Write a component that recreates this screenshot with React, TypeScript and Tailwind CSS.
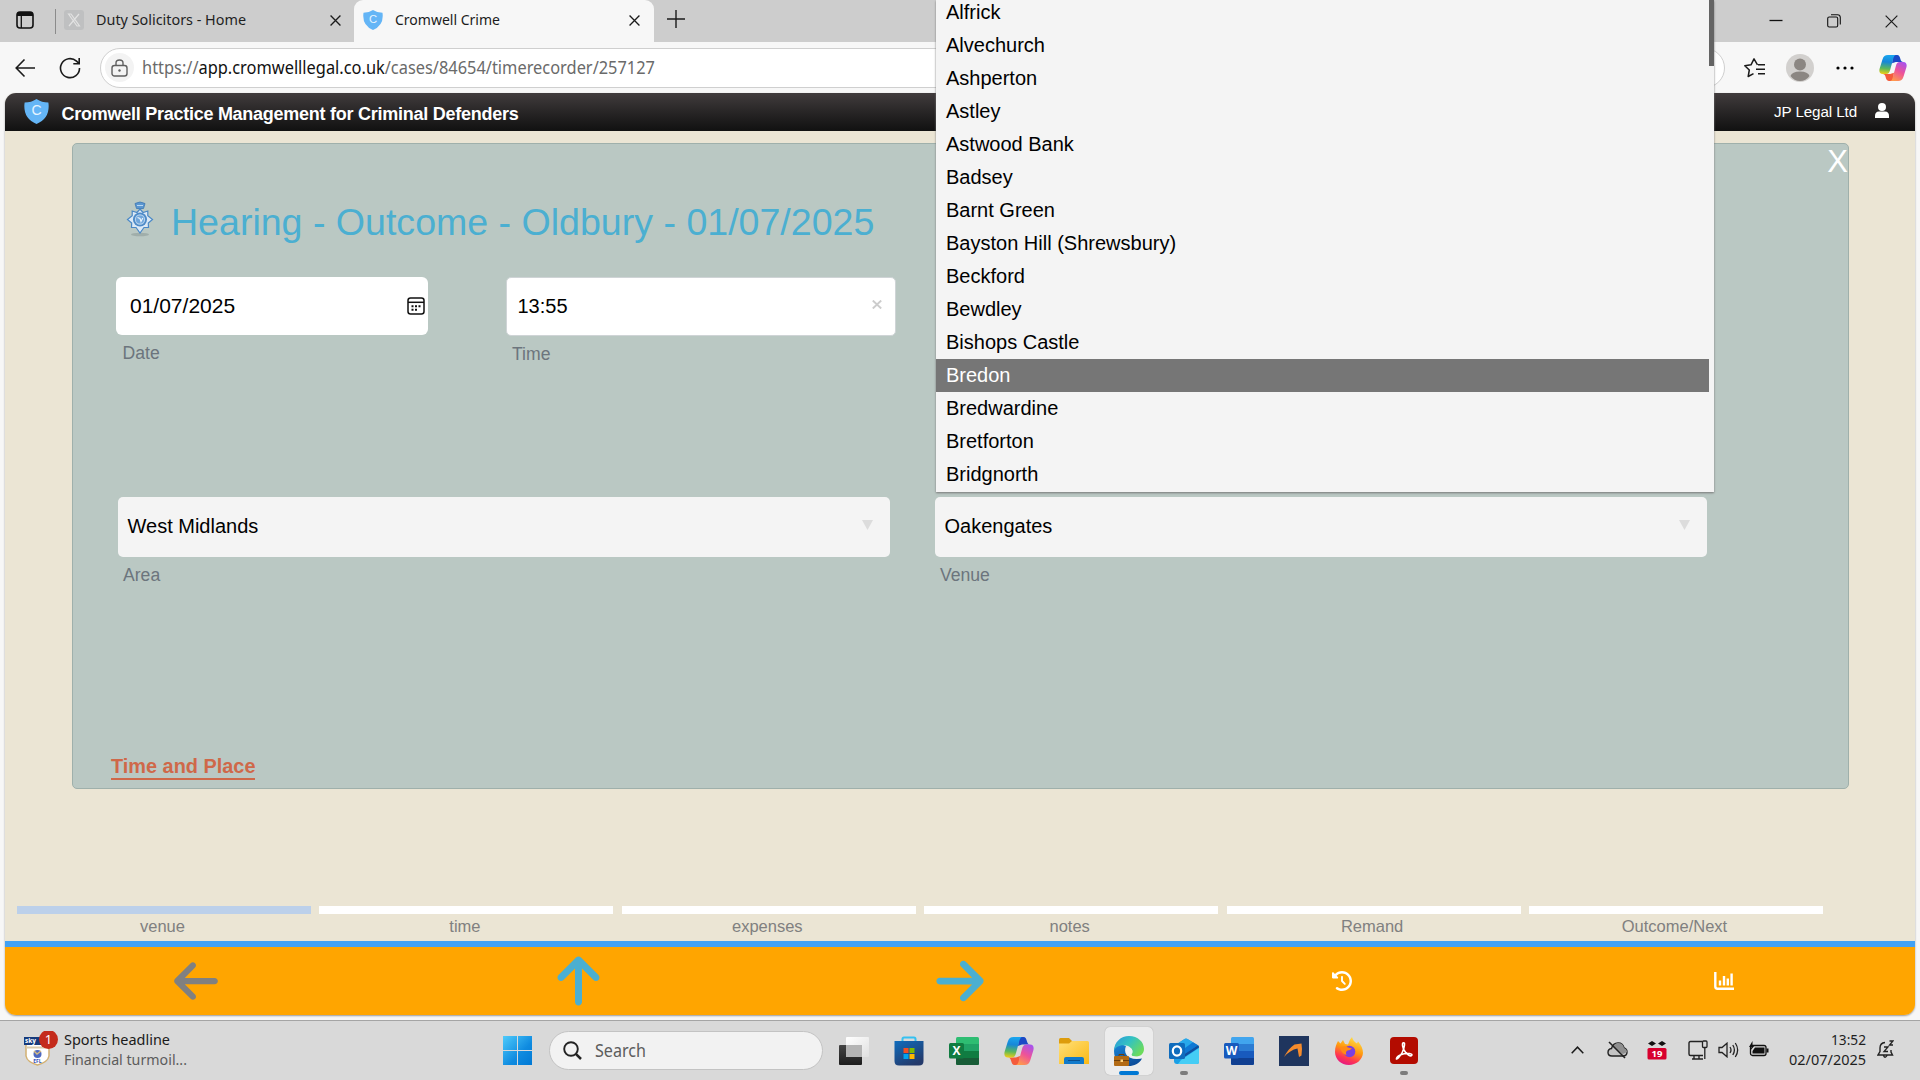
import React from "react";
import { FaArrowLeft, FaArrowRight, FaArrowUp, FaClockRotateLeft } from "react-icons/fa6";

const places = [
  "Alfrick", "Alvechurch", "Ashperton", "Astley", "Astwood Bank", "Badsey", "Barnt Green",
  "Bayston Hill (Shrewsbury)", "Beckford", "Bewdley", "Bishops Castle", "Bredon",
  "Bredwardine", "Bretforton", "Bridgnorth",
];

const steps = ["venue", "time", "expenses", "notes", "Remand", "Outcome/Next"];

/* Single line of text held to a fixed width and centred vertically. */
function Fit({ text, width, size, color, weight, family, height, children }: {
  text?: string; width: number; size: number; color: string; weight?: number;
  family?: string; height?: number; children?: React.ReactNode;
}) {
  const h = height ?? Math.ceil(size * 1.4);
  return (
    <svg width={width + 4} height={h} className="block shrink-0 overflow-visible">
      <text
        x={0}
        y={h / 2 + size * 0.36}
        fontSize={size}
        fill={color}
        fontWeight={weight ?? 400}
        fontFamily={family ?? "'Noto Sans', sans-serif"}
        textLength={width}
        lengthAdjust="spacingAndGlyphs"
      >
        {children ?? text}
      </text>
    </svg>
  );
}

function Shield({ w, h }: { w: number; h: number }) {
  return (
    <svg width={w} height={h} viewBox="0 0 24 24" preserveAspectRatio="none" className="block shrink-0">
      <path d="M12 0 Q17 3.4 23.4 3.4 Q25.500 18.500 12 24 Q-1.500 18.500 .6 3.400 Q7 3.400 12 0Z" fill="#64b5f6" />
      <text x="12" y="15.200" textAnchor="middle" fontSize="13.500" fill="#e6f4ff" fontFamily="Liberation Sans, sans-serif">C</text>
    </svg>
  );
}

function Badge() {
  return (
    <svg width="28" height="36" viewBox="0 0 28 36" className="block shrink-0">
      <defs>
        <radialGradient id="bdg"><stop offset="0" stopColor="#5f9bd6" /><stop offset="1" stopColor="#4a88c6" /></radialGradient>
      </defs>
      <ellipse cx="14" cy="33.500" rx="9" ry="1.800" fill="#95a3a0" opacity=".7" />
      <path d="M9 2.500 Q14 -.5 19 2.500 L17.500 7.500 H10.500Z" fill="#5c97d0" stroke="#3c76b2" strokeWidth=".8" />
      <path d="M11 4.500h6" stroke="#bcd8f2" />
      <path d="M14 8 L17 11.500 L21.800 10 L21.800 14.800 L26.500 18.500 L22.300 22 L22.500 26.500 L18 26.500 L14 32 L10 26.500 L5.500 26.500 L5.700 22 L1.500 18.500 L6.200 14.800 L6.200 10 L11 11.500Z" fill="#dbe9f6" stroke="#4a88c6" strokeWidth="1.200" />
      <circle cx="14" cy="18.500" r="7" fill="url(#bdg)" />
      <circle cx="14" cy="18.500" r="4.600" fill="#6fa6dc" stroke="#b7d2ec" strokeWidth="1.100" />
      <path d="M11.500 16.500 L14 17.500 L15 20.500 L16.800 17" stroke="#e8f3fc" strokeWidth="1.200" fill="none" />
    </svg>
  );
}

function Copilot({ s, id }: { s: number; id: string }) {
  return (
    <svg width={s} height={s} viewBox="0 0 30 30" className="block shrink-0">
      <defs>
        <linearGradient id={id + "a"} x1="0.300" y1="0" x2="0.200" y2="1"><stop offset="0" stopColor="#1aa5ee" /><stop offset=".35" stopColor="#1687d9" /><stop offset=".7" stopColor="#5bb85c" /><stop offset="1" stopColor="#f4cf12" /></linearGradient>
        <linearGradient id={id + "b"} x1="0.800" y1="0" x2="0.300" y2="1"><stop offset="0" stopColor="#a653ee" /><stop offset=".5" stopColor="#ee5398" /><stop offset="1" stopColor="#ff9a4c" /></linearGradient>
      </defs>
      <path d="M15 1 H19.500 C21.600 1 22.300 3 23 5.500 C23.600 7.500 24.200 8.500 26 8.500 H18 L14 10Z" fill="#1b49c6" />
      <path d="M15 29 H10.500 C8.400 29 7.700 27 7 24.500 C6.400 22.500 5.800 21.500 4 21.500 H12 L16 20Z" fill="#f45b3b" />
      <path d="M9.500 1 H18.500 C16.500 1 15.800 3 15 6 L12 17 C11.200 20 10.200 21.500 7.500 21.500 H4 C.6 21.500 -.2 18.500 .7 15.500 L3.800 5.500 C4.800 2.300 6.500 1 9.500 1Z" fill={`url(#${id}a)`} />
      <path d="M20.500 29 H11.500 C13.500 29 14.200 27 15 24 L18 13 C18.800 10 19.800 8.500 22.500 8.500 H26 C29.400 8.500 30.200 11.500 29.300 14.500 L26.200 24.500 C25.200 27.700 23.500 29 20.500 29Z" fill={`url(#${id}b)`} />
    </svg>
  );
}

function Cross({ s }: { s: number }) {
  return <svg width={s} height={s} viewBox="0 0 10 10" className="block shrink-0"><path d="M.5 .5 9.500 9.500M9.500 .5 .5 9.500" stroke="#1b1b1b" strokeWidth={s > 12 ? 0.9 : 1.2} /></svg>;
}

function BrowserChrome() {
  return (
    <>
      <div className="flex h-[42px] items-start bg-[#cdcdcd]">
        <div className="flex h-[42px] w-[354px] shrink-0 items-center pb-[2px] pl-4">
          <svg width="18" height="18" viewBox="0 0 18 18" className="shrink-0"><rect x="1" y="1" width="16" height="16" rx="3" fill="none" stroke="#111" strokeWidth="1.600" /><path d="M1 5V3.500Q1 1 3.500 1H14.500Q17 1 17 3.500V5Z" fill="#111" /><path d="M5.300 5V17" stroke="#111" strokeWidth="1.300" /></svg>
          <div className="ml-[21px] mt-[2px] h-[25px] w-px shrink-0 bg-[#8b8b8b]" />
          <svg width="20" height="20" viewBox="0 0 20 20" className="ml-2 shrink-0"><rect width="20" height="20" rx="3" fill="#bfc0c1" /><path d="M4.500 4 13 16H15.500L7 4ZM15 4 5 16" fill="none" stroke="#e2e2e2" strokeWidth="1.200" /></svg>
          <div className="ml-3 flex-1 pb-[2px]"><Fit text="Duty Solicitors - Home" width={150} size={15} color="#1f1f1f" /></div>
          <div className="mr-[13px]"><Cross s={11} /></div>
        </div>
        <div className="flex h-[42px] w-[300px] shrink-0 items-center rounded-t-[9px] bg-[#f7f7f7] pb-[2px] pl-[9px]">
          <Shield w={20} h={20} />
          <div className="ml-3 flex-1 pb-[2px]"><Fit text="Cromwell Crime" width={105} size={15} color="#1b1b1b" /></div>
          <div className="mr-[14px]"><Cross s={11} /></div>
        </div>
        <svg width="18" height="18" viewBox="0 0 18 18" className="ml-[13px] mt-[10px]"><path d="M9 0V18M0 9H18" stroke="#1b1b1b" strokeWidth="1.400" /></svg>
        <div className="ml-auto mr-[22px] flex h-[42px] items-center gap-[44px]">
          <svg width="14" height="14" viewBox="0 0 14 14"><path d="M.5 6.500H13.500" stroke="#111" strokeWidth="1.300" /></svg>
          <svg width="14" height="14" viewBox="0 0 14 14"><rect x=".7" y="3" width="10" height="10" rx="1.500" fill="none" stroke="#111" strokeWidth="1.100" /><path d="M4 .7H10.500Q13.300 .7 13.300 3.500V10.500" fill="none" stroke="#111" strokeWidth="1.100" /></svg>
          <Cross s={13} />
        </div>
      </div>
      <div className="flex h-[51px] items-center bg-[#f7f7f7] pl-[15px] pr-[13px]">
        <svg width="21" height="20" viewBox="0 0 21 20"><path d="M20 10H1.500M9.500 1.500 1.200 10 9.500 18.500" fill="none" stroke="#1b1b1b" strokeWidth="1.600" /></svg>
        <svg width="22" height="22" viewBox="0 0 22 22" className="ml-[23px]"><path d="M20.500 11A9.500 9.500 0 1 1 17.500 4.200L20 6.500M20.200 1V6.800H14.300" fill="none" stroke="#1b1b1b" strokeWidth="1.600" /></svg>
        <div className="ml-[19px] flex h-10 w-[1625px] shrink-0 items-center rounded-full border border-[#cfcfcf] bg-white pl-1">
          <div className="flex size-[29px] items-center justify-center rounded-full bg-[#f3f3f3]">
            <svg width="17" height="18" viewBox="0 0 17 18"><rect x="1" y="6.500" width="15" height="10.500" rx="2.500" fill="none" stroke="#5f5f5f" strokeWidth="1.400" /><path d="M5 6.500V4Q5 1 8.500 1T12 4V6.500" fill="none" stroke="#5f5f5f" strokeWidth="1.400" /><circle cx="8.500" cy="11.500" r="1.200" fill="#5f5f5f" /></svg>
          </div>
          <div className="ml-2"><Fit width={513} size={18} color="#6a6a6a"><tspan>https://</tspan><tspan fill="#111">app.cromwelllegal.co.uk</tspan><tspan>/cases/84654/timerecorder/257127</tspan></Fit></div>
        </div>
        <div className="ml-auto flex items-center">
          <svg width="22" height="20" viewBox="0 0 22 20"><path d="M13.500 6.800 10 .8 7 6.800 .8 7.700 5.300 12 4.200 18.500 9.500 15.700M14 6.800H21M12 11.300H21M14 15.800H21" fill="none" stroke="#1b1b1b" strokeWidth="1.500" strokeLinejoin="round" /></svg>
          <svg width="28" height="28" viewBox="0 0 28 28" className="ml-5"><circle cx="14" cy="14" r="14" fill="#d2d0ce" /><circle cx="14" cy="10.500" r="6" fill="#8b8682" /><path d="M4.500 22Q6 17.500 14 17.500T23.500 22Q20 27 14 27T4.500 22Z" fill="#8b8682" /></svg>
          <svg width="18" height="4" viewBox="0 0 18 4" className="ml-[22px]"><circle cx="2" cy="2" r="1.600" /><circle cx="9" cy="2" r="1.600" /><circle cx="16" cy="2" r="1.600" /></svg>
          <div className="ml-[25px]"><Copilot s={28} id="ct" /></div>
        </div>
      </div>
    </>
  );
}

function Select({ value, label }: { value: string; label: string }) {
  return (
    <div className="w-[772px]">
      <div className="flex h-[60px] items-center justify-between rounded-[5px] bg-[#f4f4f4] pl-[9.500px] pr-[17px] text-[20px] text-black">
        <span className="relative top-[-1px]">{value}</span>
        <svg width="11" height="10" viewBox="0 0 11 10" className="relative top-[-2px]"><path d="M0 0H11L5.500 10Z" fill="#dcdcdc" /></svg>
      </div>
      <div className="mt-[5px] pl-[5px] text-[17.600px] leading-[27px] text-[#6c757d]">{label}</div>
    </div>
  );
}

function Panel() {
  return (
    <div className="ml-[67px] mt-3 h-[646px] w-[1777px] rounded-[5px] border border-[#9fb0ab] bg-[#bac8c3]">
      <div className="flex h-[53px] justify-end pt-[1px] text-[31px] leading-[34px] text-white">X</div>
      <div className="flex h-[48px] items-start pl-[53px]">
        <div className="pt-[4px]"><Badge /></div>
        <h1 className="ml-[17px] mt-[1px] whitespace-nowrap text-[37.550px] leading-[48px] text-[#4bafd1]">Hearing - Outcome - Oldbury - 01/07/2025</h1>
      </div>
      <div className="flex h-[220px] items-start pl-[43px] pt-[32px]">
        <div className="w-[312px]">
          <div className="flex h-[58px] items-center justify-between rounded-[6px] bg-white pl-[14px] pr-[3px] text-[21px] text-black">
            <span>01/07/2025</span>
            <svg width="18" height="18" viewBox="0 0 18 18"><rect x="1" y="1" width="16" height="16" rx="2.500" fill="none" stroke="#111" strokeWidth="1.500" /><path d="M1 5.300H17" stroke="#111" strokeWidth="1.500" /><path d="M4.500 9.200h2M8 9.200h2M11.500 9.200h2M4.500 12.700h2M8 12.700h2" stroke="#111" strokeWidth="1.900" /></svg>
          </div>
          <div className="mt-[5px] pl-[6.500px] text-[17.600px] leading-[27px] text-[#6c757d]">Date</div>
        </div>
        <div className="ml-[78px] w-[390px]">
          <div className="flex h-[59px] items-center justify-between rounded-[5px] border border-[#cfd4d6] bg-white pl-[10.500px] pr-[13px] text-[20px] text-black">
            <span className="relative top-[-1px]">13:55</span>
            <svg width="10" height="9" viewBox="0 0 10 9" className="relative top-[-2px]"><path d="M.8 .5 9.200 8.500M9.200 .5 .8 8.500" stroke="#ccc" strokeWidth="1.900" /></svg>
          </div>
          <div className="mt-[5px] pl-[6px] text-[17.600px] leading-[27px] text-[#6c757d]">Time</div>
        </div>
      </div>
      <div className="flex h-[258px] items-start gap-[45px] pl-[45px] pt-[32px]">
        <Select value="West Midlands" label="Area" />
        <Select value="Oakengates" label="Venue" />
      </div>
      <div className="flex pl-[38px] pt-[32px]">
        <span className="border-b-2 border-[#cf6849] text-[19.900px] font-bold leading-[23px] text-[#cf6849]">Time and Place</span>
      </div>
    </div>
  );
}

function Workspace() {
  return (
    <div className="flex h-[927px] flex-col bg-[#f7f7f7] px-[5px] pb-[5px]">
      <div className="flex h-[922px] flex-col overflow-hidden rounded-[11px] bg-[#ebe5d4] shadow-[0_1px_2px_#999]">
        <header className="flex h-[38px] shrink-0 items-center bg-linear-to-b from-[#413c3d] to-[#111] pl-[19px] pr-[25px] text-white">
          <div className="pb-[2px]"><Shield w={25} h={25} /></div>
          <span className="ml-[12.500px] mt-1 text-[18px] font-bold leading-6 tracking-[-0.260px]">Cromwell Practice Management for Criminal Defenders</span>
          <span className="ml-auto text-[15.200px] tracking-[-0.100px]">JP Legal Ltd</span>
          <svg width="14" height="15" viewBox="0 0 14 15" className="ml-[18px] mr-px -mt-[3px]"><circle cx="7" cy="4" r="4" fill="#fff" /><path d="M0 15V13Q0 8.500 4 8.500H10Q14 8.500 14 13V15Z" fill="#fff" /></svg>
        </header>
        <Panel />
        <div className="mt-[117px] flex gap-[8.400px] pl-3">
          {steps.map((s, i) => (
            <div key={s} className="w-[294px]">
              <div className={i === 0 ? "h-2 bg-[#bcd0ea]" : "h-2 bg-white"} />
              <div className="h-[27px] pr-[3px] text-center text-[16.500px] leading-[25px] text-[#808080]">{s}</div>
            </div>
          ))}
        </div>
        <nav className="grid flex-1 grid-cols-5 items-center border-t-[6px] border-[#42a2f5] bg-[#ffa500]">
          <FaArrowLeft className="mx-auto h-[50px] w-[44px] text-[#808080]" />
          <FaArrowUp className="mx-auto h-[56px] w-[49px] text-[#4bafd1]" />
          <FaArrowRight className="mx-auto h-[54px] w-[48px] text-[#4bafd1]" />
          <FaClockRotateLeft className="mx-auto size-5 text-white" />
          <svg width="20" height="18" viewBox="0 0 20 18" className="mx-auto"><path d="M1.300 0V14.500Q1.300 16.700 3.500 16.700H20" fill="none" stroke="#fff" strokeWidth="2.400" /><path d="M6 8.500V13.500M10 4V13.500M13.800 6.500V13.500M17.600 1.500V13.500" stroke="#fff" strokeWidth="2.400" /></svg>
        </nav>
      </div>
    </div>
  );
}

function Dropdown() {
  return (
    <div className="absolute left-[936px] top-0 h-[492px] w-[778px] overflow-hidden bg-[#f4f4f4] shadow-[0_1px_2px_#777]">
      <ul className="-mt-[4px] w-[773px]">
        {places.map((p) => (
          <li key={p} className={p === "Bredon" ? "h-[33px] bg-[#767676] pl-[10px] text-[20px] leading-[33px] text-white" : "h-[33px] pl-[10px] text-[20px] leading-[33px] text-black"}>{p}</li>
        ))}
      </ul>
      <div className="absolute right-0 top-0 h-[66px] w-[5px] bg-[#646464]" />
    </div>
  );
}

function OfficeTile({ letter, dark, c }: { letter: string; dark: string; c: string[] }) {
  return (
    <svg width="30" height="30" viewBox="0 0 30 30">
      <rect x="7" y="1" width="23" height="28" rx="1.500" fill={c[0]} />
      <path d="M7 8h23v7H7z" fill={c[1]} /><path d="M7 15h23v7H7z" fill={c[2]} /><path d="M7 22h23v5.500Q30 29 28.500 29H8.500Q7 29 7 27.500z" fill={c[3]} />
      <rect x="0" y="7" width="15" height="15.500" rx="1.500" fill={dark} />
      <text x="7.500" y="19" textAnchor="middle" fontSize="12" fontWeight="700" fill="#fff" fontFamily="Open Sans, sans-serif">{letter}</text>
    </svg>
  );
}

function TaskIcons() {
  return (
    <>
      <svg width="30" height="30" viewBox="0 0 30 30">
        <defs>
          <linearGradient id="tvd" x1="0" y1="0" x2="0" y2="1"><stop offset="0" stopColor="#444" /><stop offset="1" stopColor="#1d1d1d" /></linearGradient>
          <linearGradient id="tvl" x1="0" y1="0" x2="1" y2="1"><stop offset="0" stopColor="#fff" /><stop offset="1" stopColor="#e0e0e0" /></linearGradient>
        </defs>
        <rect x="0" y="9" width="23" height="20" rx="1" fill="url(#tvd)" /><rect x="7" y="1" width="23" height="20" rx="1" fill="url(#tvl)" /><rect x="7" y="9" width="16" height="12" fill="#b4b4b4" />
      </svg>
      <svg width="30" height="30" viewBox="0 0 30 30">
        <defs><linearGradient id="st" x1="0" y1="0" x2="0.600" y2="1"><stop offset="0" stopColor="#0f6cbd" /><stop offset="1" stopColor="#243a6b" /></linearGradient></defs>
        <path d="M8.500 6V3Q8.500 1.500 10 1.500H20Q21.500 1.500 21.500 3V6" fill="none" stroke="#35c1f1" strokeWidth="2" />
        <path d="M.5 5H29.500V25Q29.500 29.500 25 29.500H5Q.5 29.500 .5 25Z" fill="url(#st)" />
        <path d="M9.500 12h5v5h-5z" fill="#f25022" /><path d="M15.500 12h5v5h-5z" fill="#7fba00" /><path d="M9.500 18h5v5h-5z" fill="#00a4ef" /><path d="M15.500 18h5v5h-5z" fill="#ffb900" />
      </svg>
      <OfficeTile letter="X" dark="#107c41" c={["#2ebd72", "#21a366", "#107c41", "#185c37"]} />
      <Copilot s={30} id="cb" />
      <svg width="30" height="30" viewBox="0 0 30 30">
        <defs><linearGradient id="fo" x1="0" y1="0" x2="1" y2="1"><stop offset="0" stopColor="#ffe07a" /><stop offset="1" stopColor="#fbb914" /></linearGradient></defs>
        <path d="M0 3.500Q0 2 1.500 2H10L13 5V12H0Z" fill="#dd9c0c" />
        <path d="M0 7.500H10L13 5H28.500Q30 5 30 6.500V28H0Z" fill="url(#fo)" />
        <path d="M5 28V23Q5 21 7 21H23Q25 21 25 23V28Z" fill="#117acb" /><path d="M9 24.500H21" stroke="#0a4f8e" />
      </svg>
    </>
  );
}

function EdgeIcon() {
  return (
    <svg width="30" height="30" viewBox="0 0 30 30">
      <defs>
        <linearGradient id="eg" x1="0" y1="0" x2="1" y2="0.600"><stop offset="0" stopColor="#2a94dc" /><stop offset=".5" stopColor="#33c2c2" /><stop offset="1" stopColor="#6cdb5c" /></linearGradient>
        <linearGradient id="eb" x1="0" y1="0" x2="0.500" y2="1"><stop offset="0" stopColor="#1a86d8" /><stop offset="1" stopColor="#0c4e9b" /></linearGradient>
      </defs>
      <path d="M0 15C0 8 7 7 12 10 9 17 13 25 28 22.500 25 28 20 30 15 30 6 30 0 24 0 15Z" fill="url(#eb)" />
      <path d="M0 15C0 6 7 0 15 0 24 0 30 6 30 13 30 18 26 20.500 22 20.500 19 20.500 17 19.500 17.500 18.500 20 16 18 10.500 12 9.500 6 8.500 1 11 0 15Z" fill="url(#eg)" />
      <path d="M12 15.500Q12 11.500 15.500 11.800 19 12.500 18.300 16.500 17 18 17.300 18.800 17.500 20.500 22 20.800 25.500 21 28.500 19.500L27.500 22Q20 23.500 15.500 20.500 12 18.500 12 15.500Z" fill="#eef2f4" />
      <rect x="0" y="20" width="15" height="10" rx="1" fill="#b26a14" /><path d="M5 20V18.500H10V20M0 24.500H15" stroke="#6f3f08" fill="none" /><path d="M6.500 23.500h2.500v2.500H6.500z" fill="#ffd27a" />
    </svg>
  );
}

function MoreIcons() {
  return (
    <>
      <svg width="30" height="30" viewBox="0 0 30 30">
        <path d="M5 10 15.500 3Q17 2 18.500 3L30 10V26Q30 28 28 28H8Q5 28 5 25Z" fill="#1a9fe6" />
        <path d="M9 7.300 15.500 3Q17 2 18.500 3L24 6.300 12 15Z" fill="#28a8ea" />
        <path d="M24 6.300 29 9.300 14 19V13.500Z" fill="#0f78d4" />
        <path d="M29 9.300Q30 10 30 11.500L14 22V19Z" fill="#0f4fa0" />
        <path d="M12 24 30 12V26Q30 28 28 28H9Z" fill="#45cdf5" />
        <rect x="0" y="7" width="16" height="16" rx="1.500" fill="#0f6cbd" /><ellipse cx="8" cy="15" rx="4.200" ry="4.600" fill="none" stroke="#fff" strokeWidth="2.200" />
      </svg>
      <OfficeTile letter="W" dark="#185abd" c={["#41a5ee", "#2b7cd3", "#185abd", "#103f91"]} />
      <svg width="30" height="30" viewBox="0 0 30 30"><rect width="30" height="30" fill="#1f355e" /><path d="M5 21Q9 13 15.500 8.500L22.500 7.500Q23.500 13 22.500 19.500L20 21 18.500 12.500Q11 14 5 21Z" fill="#f58b2c" /></svg>
      <svg width="30" height="30" viewBox="0 0 30 30">
        <defs><linearGradient id="ff" x1="0.700" y1="0" x2="0.300" y2="1"><stop offset="0" stopColor="#ffe14a" /><stop offset=".45" stopColor="#ff980e" /><stop offset=".75" stopColor="#ff3750" /><stop offset="1" stopColor="#e31587" /></linearGradient></defs>
        <path d="M4 5 6.500 7.500 9 4 11 8 14 8.500Q15 4 18 1 19 5 23 7.500L24 5.500Q29 11 29 17C28.500 24 22 29 15 29 7 29 1 23 1 16 1 11 2.500 8 4 5Z" fill="url(#ff)" />
        <circle cx="15.500" cy="15.500" r="5.800" fill="#7a3fe0" /><path d="M6 12Q10 9 14 11.500L18 12.500Q16 14.500 13.500 14.500 11 16 12.500 19 8 18 6 12Z" fill="#ff8a16" />
      </svg>
      <svg width="30" height="30" viewBox="0 0 30 30"><rect x="1" y="1" width="28" height="27" rx="4" fill="#b30b00" /><path d="M7.500 22.500C8 19.500 14 17 20.500 17.500 25 18.200 22.500 21 19.500 19 15 16 13 10.500 13.500 8 14 6 16 6.500 15.500 9 15 13 12 19 9.500 21.800 8 23.500 7 23.200 7.500 22.500Z" fill="none" stroke="#fff" strokeWidth="1.600" /></svg>
    </>
  );
}

function Taskbar() {
  return (
    <div className="flex h-[60px] items-center border-t border-[#a5a5a5] bg-[#d9d9d9]">
      <svg width="40" height="40" viewBox="0 0 40 40" className="ml-[24px] shrink-0">
        <path d="M2 8H25V25Q24 31 13.500 34 3 31 2 25Z" fill="#fff" stroke="#d2b071" strokeWidth="1.500" />
        <rect x="0" y="6" width="26" height="8" fill="#153a7c" /><path d="M2 16.500H25" stroke="#d9c9ab" strokeWidth="2" />
        <text x="6.500" y="12" textAnchor="middle" fontSize="6.500" fontWeight="700" fill="#fff" fontFamily="Open Sans, sans-serif">sky</text>
        <circle cx="13.500" cy="23" r="4" fill="#4d68c0" /><path d="M10 20l3 3 4-3" stroke="#d5ba82" strokeWidth="1.500" fill="none" />
        <text x="13.500" y="31.500" textAnchor="middle" fontSize="5" fontWeight="700" fill="#3550b5" fontFamily="Open Sans, sans-serif">EFL</text>
        <circle cx="24.500" cy="8.500" r="9.500" fill="#c42b1c" />
        <text x="24.500" y="13.300" textAnchor="middle" fontSize="13" fill="#fff" fontFamily="Noto Sans, sans-serif">1</text>
      </svg>
      <div className="w-[439px] shrink-0 pb-[2px]">
        <Fit text="Sports headline" width={106} size={15} height={20} color="#1b1b1b" />
        <Fit text="Financial turmoil..." width={123} size={15} height={20} color="#5c5c5c" />
      </div>
      <svg width="29" height="29" viewBox="0 0 29 29" className="shrink-0">
        <defs><linearGradient id="win" x1="0" y1="0" x2="1" y2="1"><stop offset="0" stopColor="#4fcbfb" /><stop offset=".6" stopColor="#0f8be0" /><stop offset="1" stopColor="#0078d4" /></linearGradient></defs>
        <path d="M0 0H14V14H0ZM15 0H29V14H15ZM0 15H14V29H0ZM15 15H29V29H15Z" fill="url(#win)" />
      </svg>
      <div className="ml-[17px] flex h-[39px] w-[274px] shrink-0 items-center rounded-full border border-[#c3c3c3] bg-[#f2f2f2] pl-[13px]">
        <svg width="19" height="19" viewBox="0 0 19 19"><circle cx="8" cy="8" r="6.800" fill="none" stroke="#222" strokeWidth="1.900" /><path d="M12.800 12.800 18 18" stroke="#222" strokeWidth="2.500" /></svg>
        <div className="ml-[13px]"><Fit text="Search" width={51} size={17.5} color="#5d5d5d" /></div>
      </div>
      <div className="ml-[15.500px] flex items-center gap-[25px]"><TaskIcons /></div>
      <div className="relative ml-[16px] flex h-[48px] w-[48px] shrink-0 items-center justify-center rounded-[5px] bg-[#ececec] shadow-[0_0_1px_#999]">
        <EdgeIcon />
        <div className="absolute bottom-0 left-[14px] h-1 w-5 rounded-full bg-[#0078d4]" />
      </div>
      <div className="relative ml-[16px] flex items-center gap-[25px]">
        <MoreIcons />
        <div className="absolute left-[11px] top-[35px] h-1 w-2 rounded-full bg-[#7c7c7c]" />
        <div className="absolute right-[11px] top-[35px] h-1 w-2 rounded-full bg-[#7c7c7c]" />
      </div>
      <div className="ml-auto flex items-center pb-[2px]">
        <svg width="13" height="8" viewBox="0 0 13 8"><path d="M.7 7.300 6.500 1.200 12.300 7.300" fill="none" stroke="#1b1b1b" strokeWidth="1.500" /></svg>
        <svg width="21" height="18" viewBox="0 0 21 18" className="ml-[23px]"><path d="M5 15Q1 15 1 11.500 1 8 4.500 7.500 6 2 11 2 16 2 17 7 20 8 20 11 20 15 16 15Z" fill="#c4c4c4" stroke="#222" strokeWidth="1.400" /><path d="M6 6Q8 2 11 2 16 2 17 7 20 8 20 11L16 13Z" fill="#8f8f8f" /><path d="M2 1 18 17" stroke="#222" strokeWidth="1.600" /></svg>
        <svg width="20" height="20" viewBox="0 0 20 20" className="ml-[19px]"><path d="M1 3.500 5 1 9 3.500 5 6ZM11 3.500 15 1 19 3.500 15 6Z" fill="#111" /><rect x=".5" y="8" width="19" height="11.500" rx="1.500" fill="#d8002e" /><text x="10" y="17.300" textAnchor="middle" fontSize="9.500" fontWeight="700" fill="#fff" fontFamily="Open Sans, sans-serif">19</text></svg>
        <svg width="20" height="20" viewBox="0 0 20 20" className="ml-[21px]"><path d="M14 1.500H2.500Q1 1.500 1 3V14Q1 15.500 2.500 15.500H15M6 15.500V19M11 15.500V19M4 19H15" fill="none" stroke="#222" strokeWidth="1.400" /><rect x="14.500" y="1" width="4.500" height="6.500" rx="1" fill="none" stroke="#222" strokeWidth="1.300" /><path d="M16.800 7.500V19" stroke="#222" strokeWidth="1.300" /></svg>
        <svg width="21" height="16" viewBox="0 0 21 16" className="ml-[10px]"><path d="M1 5.500H4L9 1.200V14.800L4 10.500H1ZM12 5Q14 8 12 11M14.800 3Q18 8 14.800 13M17.300 1Q22 8 17.300 15" fill="none" stroke="#222" strokeWidth="1.300" /></svg>
        <svg width="21" height="16" viewBox="0 0 21 16" className="-mt-[2px] ml-[9px]"><rect x="2.500" y="4.500" width="15.500" height="10" rx="2" fill="none" stroke="#111" strokeWidth="1.300" /><path d="M7 6.500H16.500V12.500H4.500V10ZM18.500 7.500H20.500V11.500H18.500Z" fill="#111" /><path d="M4.500 0 1 6H3.500L2 10 7 4H4.500Z" fill="#111" /></svg>
        <div className="ml-[20px] flex w-[77px] flex-col items-end">
          <div className="-mr-[4px]"><Fit text="13:52" width={35} size={15} height={20} color="#1f1f1f" /></div>
          <div className="-mr-[4px]"><Fit text="02/07/2025" width={77} size={15} height={20} color="#1f1f1f" /></div>
        </div>
        <svg width="17" height="19" viewBox="0 0 17 19" className="ml-[11px] mr-[26px]"><path d="M8 2.500Q3 3 3 8V11.500L1 15H15.500L14 12V10M6.500 15.500Q8 19 10 15.500" fill="none" stroke="#222" strokeWidth="1.400" /><path d="M7 7H11L7 11.500H11M12.500 1H16L12.500 5H16" fill="none" stroke="#222" strokeWidth="1.300" /></svg>
      </div>
    </div>
  );
}

export default function App() {
  return (
    <div className="relative h-[1080px] w-[1920px] overflow-hidden font-['Liberation_Sans',sans-serif]">
      <BrowserChrome />
      <Workspace />
      <Taskbar />
      <Dropdown />
    </div>
  );
}
